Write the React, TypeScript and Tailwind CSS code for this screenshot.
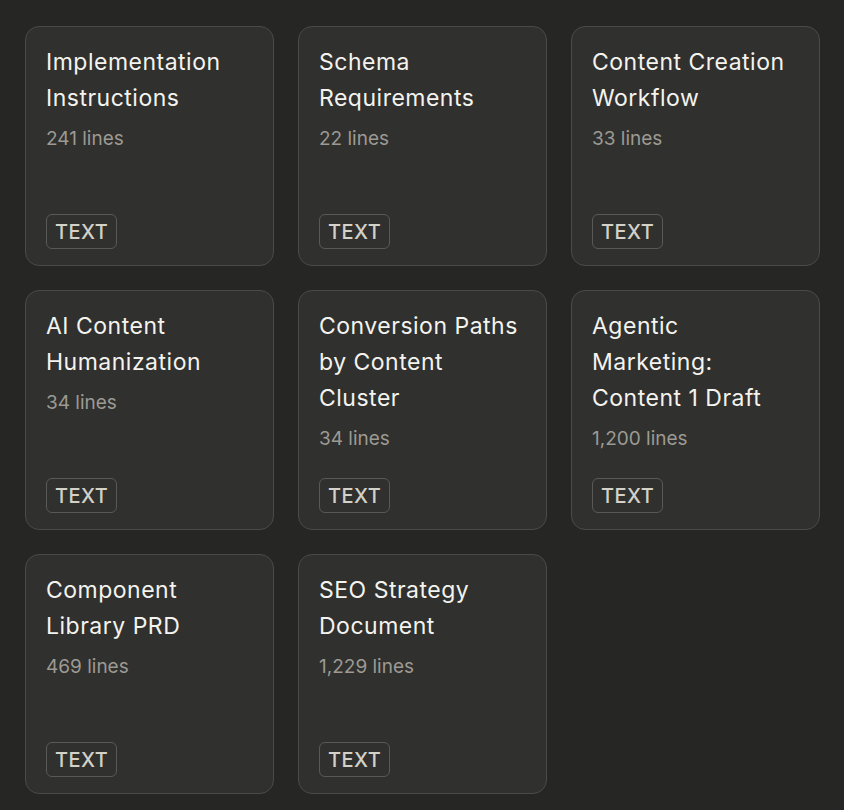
import React from 'react';

type Doc = { title: string; lines: string };

const docs: Doc[] = [
	{ title: 'Implementation Instructions', lines: '241 lines' },
	{ title: 'Schema Requirements', lines: '22 lines' },
	{ title: 'Content Creation Workflow', lines: '33 lines' },
	{ title: 'AI Content Humanization', lines: '34 lines' },
	{ title: 'Conversion Paths by Content Cluster', lines: '34 lines' },
	{ title: 'Agentic Marketing: Content 1 Draft', lines: '1,200 lines' },
	{ title: 'Component Library PRD', lines: '469 lines' },
	{ title: 'SEO Strategy Document', lines: '1,229 lines' },
];

const DocCard = ({ doc }: { doc: Doc }) => {
	return (
		<div className="flex flex-col justify-between h-[240px] rounded-[14px] border border-[#4a4a46] bg-[#30302e] px-5 pt-[17px] pb-[16px]">
			<div>
				<div className="text-[23px] leading-[36px] tracking-[0.5px] text-[#f4f3ee]">{doc.title}</div>
				<div className="text-[19px] leading-[26px] mt-[10px] text-[#9c9a93]">{doc.lines}</div>
			</div>
			<div>
				<span className="inline-flex items-center h-[35px] px-[8px] rounded-[6px] border border-[#5a5955] text-[20px] font-medium tracking-[0.5px] text-[#d3d1c8]">
					TEXT
				</span>
			</div>
		</div>
	);
};

const App = () => {
	return (
		<div className="min-h-screen bg-[#262624] pl-[25px] pr-[24px] pt-[26px] pb-4 font-['Inter',sans-serif]">
			<div className="grid grid-cols-3 gap-6">
				{docs.map((doc) => (
					<DocCard key={doc.title} doc={doc} />
				))}
			</div>
		</div>
	);
};

export default App;
